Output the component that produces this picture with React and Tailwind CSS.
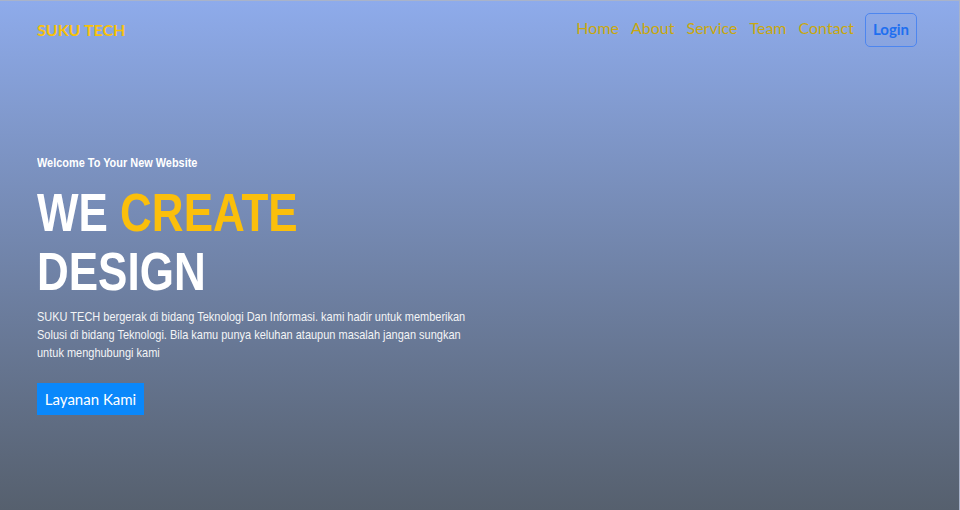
const navLinks = ["Home", "About", "Service", "Team", "Contact"];

// The reference text is a condensed Arial; Liberation Sans squeezed horizontally stands in for it.
const sans = { fontFamily: '"Liberation Sans", Arial, sans-serif' };

export default function App() {
  return (
    <div className="flex h-[510px] w-full flex-col border-t border-r border-[#a9b3c9] bg-gradient-to-b from-[#8eabeb] to-[#56606e]">
      <header className="flex h-[57px] items-center pl-[37px] pr-[42px] font-['Lato',sans-serif]">
        <a className="text-[16px] font-bold text-[#f8c10a]">SUKU TECH</a>
        <nav className="ml-auto flex items-center gap-[12px] pb-[3px] text-[16px] text-[#c9a80d]">
          {navLinks.map((link) => (
            <a key={link}>{link}</a>
          ))}
        </nav>
        <button className="ml-[11px] h-[34px] w-[52px] rounded-[5px] border border-[#4d86ef] text-[15px] font-bold text-[#1f6ff0]">
          Login
        </button>
      </header>

      <section className="pl-[37px] pt-[97px] text-white" style={sans}>
        <p className="origin-left scale-x-[0.84] text-[13px] font-bold leading-[16px]">
          Welcome To Your New Website
        </p>
        <h1 className="mt-[12px] origin-left scale-x-[0.83] text-[53px] font-bold leading-[59px]">
          WE <span className="text-[#fbbf0b]">CREATE</span>
          <br />
          DESIGN
        </h1>
        <p className="mt-[7px] w-[520px] origin-left scale-x-[0.845] text-[13px] leading-[18px] text-[#f3f4f6]">
          SUKU TECH bergerak di bidang Teknologi Dan Informasi. kami hadir untuk memberikan Solusi di bidang
          Teknologi. Bila kamu punya keluhan ataupun masalah jangan sungkan untuk menghubungi kami
        </p>
        <button className="mt-[21px] h-[32px] w-[107px] bg-[#0a88fb] font-['Lato',sans-serif] text-[15px] text-white">
          Layanan Kami
        </button>
      </section>
    </div>
  );
}
